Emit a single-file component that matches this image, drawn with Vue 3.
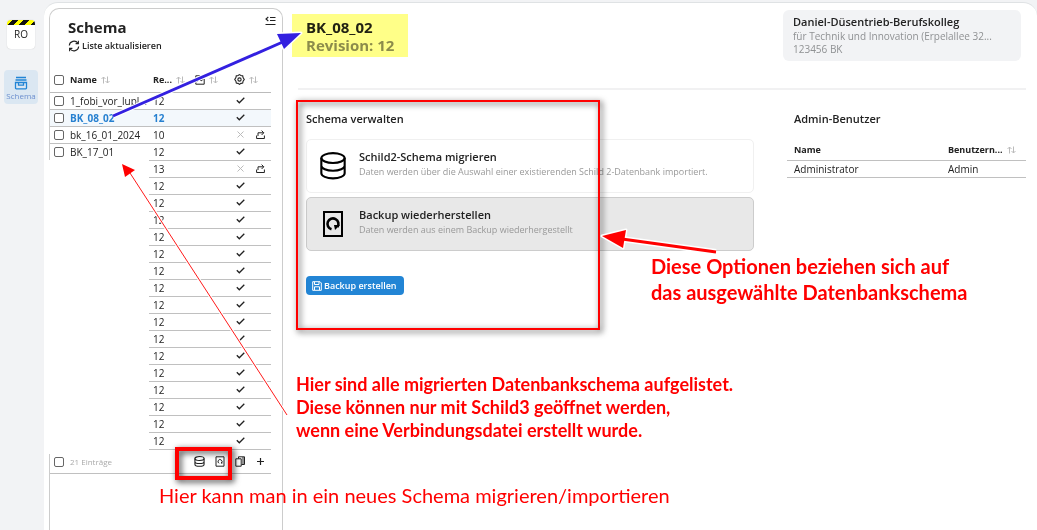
<script setup>
const revisions = [12, 12, 10, 12, 13, ...Array(16).fill(12)]
const names = ['1_fobi_vor_lupl…', 'BK_08_02', 'bk_16_01_2024', 'BK_17_01']
const rows = revisions.map((revision, i) => ({
  id: i,
  name: names[i] || '',
  revision,
  migratable: i === 2 || i === 4,
  selected: i === 1,
}))
</script>

<template>
  <div class="app">
    <nav class="rail" aria-label="Hauptmenü">
      <div class="badge"><span class="stripes"></span><span class="initials">RO</span></div>
      <a class="rail-item" href="#schema">
        <svg width="14" height="14" viewBox="0 0 14 14" fill="none" stroke="currentColor" stroke-width="1.3">
          <path d="M2 1.500h10M1.500 4h11M1.500 6.500h11v5.500q0 .8-.8.8h-9.400q-.8 0-.8-.8zM4.500 7v2.200h5V7" />
        </svg>
        <span>Schema</span>
      </a>
    </nav>

    <div class="main">
      <aside class="schema-panel">
        <header class="panel-head">
          <div>
            <h1>Schema</h1>
            <button class="refresh" type="button">
              <svg width="12" height="12" viewBox="0 0 12 12" fill="none" stroke="currentColor" stroke-width="1.1">
                <path d="M1.300 5.500a4.700 4.700 0 0 1 8.600-2.200M10.700 6.500a4.700 4.700 0 0 1-8.600 2.200M10.400.8v2.800H7.600M1.600 11.200V8.400h2.800" />
              </svg>
              Liste aktualisieren
            </button>
          </div>
          <button class="collapse" type="button" aria-label="Liste einklappen">
            <svg width="11" height="10" viewBox="0 0 11 10" fill="none" stroke="currentColor" stroke-width="1.1">
              <path d="M5 1.500h5.500M5 4.500h5.500M.5 8.500h10M3.300 1L1 3l2.300 2" />
            </svg>
          </button>
        </header>

        <table class="schemas">
          <colgroup>
            <col class="c-check" /><col class="c-name" /><col class="c-rev" /><col class="c-img" /><col class="c-state" /><col class="c-act" />
          </colgroup>
          <thead>
            <tr>
              <th><input type="checkbox" aria-label="Alle auswählen" /></th>
              <th><span class="th">Name <svg class="sort" viewBox="0 0 9 8"><path d="M2.500 7.500V1M.5 3l2-2 2 2M6.500.5V7M4.500 5l2 2 2-2" /></svg></span></th>
              <th><span class="th">Re... <svg class="sort" viewBox="0 0 9 8"><path d="M2.500 7.500V1M.5 3l2-2 2 2M6.500.5V7M4.500 5l2 2 2-2" /></svg></span></th>
              <th>
                <span class="th">
                  <svg width="10" height="10" viewBox="0 0 10 10" fill="none" stroke="currentColor"><path d="M5 .8H.8v8.400h8.400V4M2 7l2-3 2 2 2.500-2M7 1.500h2.500" /></svg>
                  <svg class="sort" viewBox="0 0 9 8"><path d="M2.500 7.500V1M.5 3l2-2 2 2M6.500.5V7M4.500 5l2 2 2-2" /></svg>
                </span>
              </th>
              <th colspan="2">
                <span class="th">
                  <svg width="11" height="11" viewBox="0 0 12 12" fill="none" stroke="currentColor" stroke-width="1.200"><path d="M6 .7l1.600 1 1.900.3.400 1.900L11.200 6l-1.300 1.900-.4 1.900-1.900.4L6 11.300l-1.600-1.100-1.900-.4-.4-1.900L.8 6l1.300-2.100.4-1.900 1.900-.3z" /><circle cx="6" cy="6" r="1.800" /></svg>
                  <svg class="sort" viewBox="0 0 9 8"><path d="M2.500 7.500V1M.5 3l2-2 2 2M6.500.5V7M4.500 5l2 2 2-2" /></svg>
                </span>
              </th>
            </tr>
          </thead>
          <tbody>
            <tr v-for="row in rows" :key="row.id" :class="{ selected: row.selected }">
              <td><input v-if="row.name" type="checkbox" :aria-label="row.name" /></td>
              <td class="name">{{ row.name }}</td>
              <td class="rev">{{ row.revision }}</td>
              <td></td>
              <td class="icon">
                <svg v-if="row.migratable" class="cross" width="9" height="9" viewBox="0 0 9 9"><path d="M1.500 1.500l6 6M7.500 1.500l-6 6" /></svg>
                <svg v-else class="tick" width="9" height="9" viewBox="0 0 9 9"><path d="M.8 4.300l2.500 2.500 5-5" /></svg>
              </td>
              <td class="icon">
                <svg v-if="row.migratable" class="share" width="9" height="9" viewBox="0 0 9 9"><path d="M.6 5.500v3h7.800v-3M2 6V2.800h5.500M5.600.6l2.200 2.200-2.200 2.200" /></svg>
              </td>
            </tr>
          </tbody>
        </table>

        <footer class="list-foot">
          <input type="checkbox" aria-label="Einträge auswählen" />
          <span class="count">21 Einträge</span>
          <div class="tools">
            <button type="button" aria-label="Schema migrieren">
              <svg width="11" height="11" viewBox="0 0 24 24" fill="none" stroke="currentColor" stroke-width="2.400"><ellipse cx="12" cy="5.500" rx="10" ry="4.300" /><path d="M2 5.500v12.500c0 2.500 4.500 4.500 10 4.500s10-2 10-4.500V5.500M2 12c0 2.500 4.500 4.500 10 4.500s10-2 10-4.500" /></svg>
            </button>
            <button type="button" aria-label="Backup importieren">
              <svg width="10" height="11" viewBox="0 0 10 11" fill="none" stroke="currentColor"><path d="M1 .8h8v9.400H1zM4 7.300a2 2 0 1 1 2.300-.2M6.800 7.800V6" /></svg>
            </button>
            <button type="button" aria-label="Schema duplizieren">
              <svg width="11" height="11" viewBox="0 0 11 11" fill="none" stroke="currentColor"><path d="M.8 2.800h5.400v7.400H.8zM3.500 2.500V.8h6v7.700H6.500M8 1v7" /></svg>
            </button>
            <button type="button" aria-label="Schema hinzufügen">
              <svg width="9" height="9" viewBox="0 0 9 9" fill="none" stroke="currentColor" stroke-width="1.200"><path d="M4.500 1v7M1 4.500h7" /></svg>
            </button>
          </div>
        </footer>
      </aside>

      <main class="detail">
        <header class="detail-head">
          <div class="title">
            <h2>BK_08_02</h2>
            <p>Revision: 12</p>
          </div>
          <div class="school">
            <strong>Daniel-Düsentrieb-Berufskolleg</strong>
            <span>für Technik und Innovation (Erpelallee 32...</span>
            <span>123456 BK</span>
          </div>
        </header>

        <div class="content">
          <section>
            <h3>Schema verwalten</h3>
            <button class="card" type="button">
              <svg width="28" height="28" viewBox="0 0 24 24" fill="none" stroke="currentColor" stroke-width="1.800"><ellipse cx="12" cy="5.200" rx="10" ry="4.200" /><path d="M2 5.200v13c0 2.400 4.500 4.400 10 4.400s10-2 10-4.400v-13M2 11.700c0 2.400 4.500 4.400 10 4.400s10-2 10-4.400" /></svg>
              <span class="card-text"><strong>Schild2-Schema migrieren</strong><span>Daten werden über die Auswahl einer existierenden Schild 2-Datenbank importiert.</span></span>
            </button>
            <button class="card active" type="button">
              <svg width="28" height="28" viewBox="0 0 28 28" fill="none" stroke="currentColor" stroke-width="2"><path d="M5 2h18v24H5z" /><path d="M12.500 19.200A5.500 5.500 0 1 1 18.500 17" stroke-width="2.600" /><path d="M15 15h6l-5 5z" fill="currentColor" stroke="none" /></svg>
              <span class="card-text"><strong>Backup wiederherstellen</strong><span>Daten werden aus einem Backup wiederhergestellt</span></span>
            </button>
            <button class="primary" type="button">
              <svg width="10" height="10" viewBox="0 0 10 10" fill="none" stroke="currentColor"><path d="M.7.7h7.300l1.300 1.300v7.300H.7zM2.500 1v2.500h4.500V1M2.500 9V5.800h5V9" /></svg>
              Backup erstellen
            </button>
          </section>

          <section>
            <h3 class="indent">Admin-Benutzer</h3>
            <table class="admins">
              <thead>
                <tr>
                  <th>Name</th>
                  <th><span class="th">Benutzern... <svg class="sort" viewBox="0 0 9 8"><path d="M2.500 7.500V1M.5 3l2-2 2 2M6.500.5V7M4.500 5l2 2 2-2" /></svg></span></th>
                </tr>
              </thead>
              <tbody>
                <tr><td>Administrator</td><td>Admin</td></tr>
              </tbody>
            </table>
          </section>
        </div>
      </main>
    </div>

    <div class="notes">
      <div class="redaction"></div>
      <div class="marker"></div>
      <div class="frame frame-options"></div>
      <div class="frame frame-tools"></div>
      <svg class="arrows" width="1037" height="530" viewBox="0 0 1037 530">
        <g class="halo"><path d="M113 116L285 41" stroke-width="5" /><path d="M301 33l-24 1 7 15z" stroke-width="3" /></g>
        <path d="M113 116L285 41" stroke="#3320e0" stroke-width="3" />
        <path d="M301 33l-24 1 7 15z" fill="#3320e0" />
        <path class="halo" d="M130 173L287 415" stroke-width="3" />
        <path d="M130 173L287 415" stroke="#ff1a1a" />
        <path d="M122 164l13 6-10 7z" fill="#f00" />
        <g class="halo"><path d="M622 239L716 252" stroke-width="6" /><path d="M602 236l24-6-3 18z" stroke-width="3" /></g>
        <path d="M622 239L716 252" stroke="#f00" stroke-width="3" />
        <path d="M602 236l24-6-3 18z" fill="#f00" />
      </svg>
      <p class="note note-options">Diese Optionen beziehen sich auf<br />das ausgewählte Datenbankschema</p>
      <p class="note note-list">Hier sind alle migrierten Datenbankschema aufgelistet.<br />Diese können nur mit Schild3 geöffnet werden,<br />wenn eine Verbindungsdatei erstellt wurde.</p>
      <p class="note note-tools">Hier kann man in ein neues Schema migrieren/importieren</p>
    </div>
  </div>
</template>

<style>
body {
  margin: 0;
  overflow: hidden;
}
</style>

<style scoped>
.app {
  position: relative;
  display: flex;
  min-height: 100vh;
  background: #f2f3f5;
  color: #222;
  font: 10px/14px "Open Sans", "Noto Sans", sans-serif;
}
h1, h2, h3, p { margin: 0; }
button {
  margin: 0;
  padding: 0;
  border: 0;
  background: none;
  color: inherit;
  font: inherit;
  cursor: pointer;
}
svg { display: block; flex: none; }
input[type="checkbox"] {
  appearance: none;
  display: block;
  box-sizing: border-box;
  width: 10px;
  height: 10px;
  margin: 0;
  border: 1px solid #666;
  border-radius: 2px;
  background: #fff;
}

.rail {
  flex: none;
  width: 44px;
  padding-top: 20px;
  box-sizing: border-box;
}
.badge {
  width: 28px;
  height: 29px;
  margin-left: 7px;
  background: #fff;
  border-radius: 4px;
  box-shadow: 0 0 1px #bbb;
  overflow: hidden;
  text-align: center;
}
.stripes {
  display: block;
  height: 5px;
  background: repeating-linear-gradient(135deg, #ff0 0 4px, #111 4px 8px);
}
.initials { display: block; line-height: 19px; }
.rail-item {
  display: flex;
  flex-direction: column;
  align-items: center;
  width: 34px;
  height: 34px;
  box-sizing: border-box;
  margin: 21px 0 0 4px;
  padding-top: 6px;
  border-radius: 4px;
  background: #dbe7f2;
  color: #2285d5;
  font-size: 8px;
  line-height: 11px;
  text-decoration: none;
}
.rail-item span { color: #6c8fce; }

.main {
  flex: 1;
  min-width: 0;
  display: flex;
  margin-top: 2px;
  padding-left: 5px;
  background: #fff;
  border-top: 1px solid #dfe2e4;
  border-radius: 14px 14px 0 0;
}
.schema-panel {
  flex: none;
  box-sizing: border-box;
  width: 234px;
  margin-top: 5px;
  border: 1px solid #ccc;
  border-bottom: 0;
  border-radius: 10px 10px 0 0;
}
.panel-head {
  display: flex;
  justify-content: space-between;
  height: 51px;
  padding: 7px 6px 0 18px;
}
h1 { font-size: 15px; line-height: 22px; font-weight: 700; }
.refresh {
  display: flex;
  align-items: center;
  gap: 2px;
  margin-top: 1px;
  font-size: 9px;
  font-weight: 600;
  line-height: 14px;
}
.collapse { align-self: flex-start; }

table { border-collapse: collapse; table-layout: fixed; }
th, td { padding: 0; text-align: left; font-weight: 400; white-space: nowrap; }
.schemas { width: 221px; }
.c-check { width: 20px; }
.c-name { width: 79px; }
.c-rev { width: 43px; }
.c-img { width: 42px; }
.c-state { width: 16px; }
.c-act { width: 21px; }
.schemas th { height: 25px; border-bottom: 1px solid #bbb; font-size: 9px; font-weight: 700; }
.schemas td { height: 16px; line-height: 16px; border-bottom: 1px solid #c0c0c0; overflow: hidden; }
.schemas th:first-child, .schemas td:first-child { padding-left: 4px; }
.schemas th:nth-child(3), .schemas td:nth-child(3) { padding-left: 4px; }
.schemas th:nth-child(4) { padding-left: 3px; }
.selected td { background: #f3f8fc; color: #2680d0; font-weight: 700; }
.icon svg { fill: none; stroke: #222; margin: 0 0 2px 2px; }
.icon .tick { stroke-width: 1.300; }
.icon .cross { stroke: #bbb; }
.icon .share { margin-left: 6px; }
.selected .icon svg { stroke: #222; }
.th { display: flex; align-items: center; gap: 4px; }
.sort { width: 9px; height: 8px; fill: none; stroke: #bbb; }

.list-foot {
  display: flex;
  align-items: center;
  width: 217px;
  height: 23px;
  padding-left: 4px;
  border-bottom: 1px solid #c0c0c0;
}
.count { margin-left: 6px; color: #aaa; font-size: 8px; }
.tools { display: flex; gap: 10px; margin-left: auto; padding-right: 6px; align-items: center; }

.detail { flex: 1; min-width: 0; padding: 7px 11px 0 15px; }
.detail-head {
  display: flex;
  justify-content: space-between;
  align-items: flex-start;
  height: 78px;
  padding: 0 5px 0 8px;
  border-bottom: 2px solid #f1f1f2;
}
.title { padding-top: 8px; }
h2, .title p { font-size: 15px; line-height: 18px; font-weight: 700; }
.title p { color: #8c8c8c; }
.school {
  display: flex;
  flex-direction: column;
  box-sizing: border-box;
  width: 238px;
  height: 51px;
  padding: 4px 10px;
  border-radius: 6px;
  background: #f2f3f5;
  color: #8f9193;
  font-size: 10px;
  line-height: 13px;
}
.school strong { color: #222; font-size: 11px; line-height: 16px; white-space: nowrap; font-weight: 600; }
.school span { white-space: nowrap; }

.content {
  display: grid;
  grid-template-columns: 1fr 239px;
  gap: 33px;
  padding: 22px 0 0 8px;
}
h3 { font-size: 11px; line-height: 14px; font-weight: 600; }
.indent { padding-left: 7px; }
.card {
  display: flex;
  align-items: center;
  gap: 12px;
  box-sizing: border-box;
  width: 100%;
  height: 54px;
  margin-top: 4px;
  padding: 0 12px;
  border: 1px solid #f0f0f0;
  border-radius: 5px;
  text-align: left;
}
h3 + .card { margin-top: 13px; }
.card svg { color: #000; }
.card.active { background: #e8e8e8; border-color: #ccc; }
.card-text { display: flex; flex-direction: column; padding-bottom: 4px; color: #999; font-size: 9px; line-height: 15px; white-space: nowrap; }
.card-text strong { color: #222; font-size: 11px; line-height: 15px; font-weight: 600; }
.primary {
  display: flex;
  align-items: center;
  gap: 2px;
  height: 19px;
  margin-top: 25px;
  padding: 0 7px 0 6px;
  border-radius: 4px;
  background: #2285d5;
  color: #fff;
  font-size: 9px;
  font-weight: 600;
}
.admins { width: 100%; margin-top: 14px; }
.admins th { height: 20px; border-bottom: 1px solid #c0c0c0; font-size: 9px; font-weight: 700; }
.admins td { height: 16px; line-height: 16px; border-bottom: 1px solid #c0c0c0; }
.admins th, .admins td { padding-left: 7px; }
.admins th:first-child { width: 147px; }

.notes { position: absolute; inset: 0; overflow: hidden; pointer-events: none; }
.redaction { position: absolute; left: 49px; top: 160px; width: 100px; height: 294px; background: #fff; }
.marker { position: absolute; left: 292px; top: 14px; width: 116px; height: 43px; background: #ffff88; mix-blend-mode: multiply; }
.arrows { position: absolute; left: 0; top: 0; fill: none; }
.halo { stroke: #fff; fill: #fff; stroke-linejoin: round; }
.frame { position: absolute; box-sizing: border-box; border: 2px solid #f00; filter: drop-shadow(2px 2px 3px rgba(0, 0, 0, 0.8)); }
.frame-options { left: 296px; top: 100px; width: 304px; height: 230px; }
.frame-tools { left: 175px; top: 447px; width: 57px; height: 33px; border-width: 4px; }
.note { position: absolute; color: #f00; font-family: Lato, Carlito, sans-serif; font-weight: 700; white-space: nowrap; }
.note-options { left: 651px; top: 253px; font-size: 20px; line-height: 26px; }
.note-list { left: 296px; top: 373px; font-size: 18px; line-height: 23px; }
.note-tools { left: 159px; top: 482px; font-size: 20px; line-height: 26px; font-weight: 400; }
</style>
